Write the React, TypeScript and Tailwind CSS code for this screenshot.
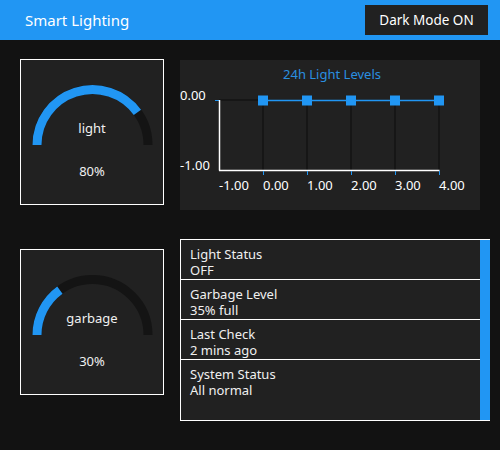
import React from "react"

const BLUE = "#2196f3"

const Gauge = ({ label, value }: { label: string; value: number }) => {
  const cx = 71.5
  const cy = 85
  const r = 55.5
  const a = Math.PI - (Math.PI * value) / 100
  const ex = cx + r * Math.cos(a)
  const ey = cy - r * Math.sin(a)
  return (
    <div className="relative w-[144px] h-[146px] border border-white bg-[#212121]">
      <svg className="absolute left-0 top-0" width="142" height="144" viewBox="0 0 142 144">
        <path
          d={`M ${cx - r} ${cy} A ${r} ${r} 0 0 1 ${cx + r} ${cy}`}
          fill="none"
          stroke="#141414"
          strokeWidth="9"
        />
        <path
          d={`M ${cx - r} ${cy} A ${r} ${r} 0 0 1 ${ex} ${ey}`}
          fill="none"
          stroke={BLUE}
          strokeWidth="9"
        />
      </svg>
      <div className="absolute left-0 right-0 top-[58px] text-center text-[13px] leading-[20px] text-[#f0f0f0]">
        {label}
      </div>
      <div className="absolute left-0 right-0 top-[101px] text-center text-[13px] leading-[20px] text-[#f0f0f0]">
        {value}%
      </div>
    </div>
  )
}

const Chart = () => {
  const xs = [83, 127, 171, 215, 259]
  const ticks = [-1, 0, 1, 2, 3, 4]
  return (
    <div className="w-[300px] h-[150px] bg-[#212121]">
      <svg width="300" height="150" viewBox="0 0 300 150" style={{ fontFamily: "'Noto Sans', sans-serif" }}>
        <text x="152" y="19" textAnchor="middle" fontSize="13" fill="#2a8fe0">
          24h Light Levels
        </text>
        <line x1="39" y1="40" x2="83" y2="40" stroke="#0c0c0c" strokeWidth="1" />
        {xs.map((x) => (
          <line key={x} x1={x} y1="40" x2={x} y2="110" stroke="#0c0c0c" strokeWidth="1" />
        ))}
        <line x1="35" y1="40.5" x2="39" y2="40.5" stroke={BLUE} strokeWidth="1" />
        <line x1="39.5" y1="40" x2="39.5" y2="110.5" stroke="#fff" strokeWidth="1.5" />
        <line x1="39" y1="110.5" x2="259.5" y2="110.5" stroke="#fff" strokeWidth="1.5" />
        {xs.map((x) => (
          <line key={"t" + x} x1={x + 0.5} y1="111" x2={x + 0.5} y2="115" stroke={BLUE} strokeWidth="1" />
        ))}
        <line x1="83" y1="40.5" x2="259" y2="40.5" stroke={BLUE} strokeWidth="1.5" />
        {xs.map((x) => (
          <rect key={"p" + x} x={x - 5} y="35.5" width="10" height="10" fill={BLUE} />
        ))}
        <text x="0" y="40" fontSize="13" fill="#fff">0.00</text>
        <text x="0" y="110" fontSize="13" fill="#fff">-1.00</text>
        {ticks.map((t, i) => (
          <text key={"l" + t} x={39 + i * 44} y="130" fontSize="13" fill="#fff">
            {t.toFixed(2)}
          </text>
        ))}
      </svg>
    </div>
  )
}

const rows = [
  { title: "Light Status", value: "OFF" },
  { title: "Garbage Level", value: "35% full" },
  { title: "Last Check", value: "2 mins ago" },
  { title: "System Status", value: "All normal" },
]

const StatusList = () => (
  <div className="flex w-[310px] h-[182px] border-y border-l border-white">
    <div className="flex flex-col flex-1 bg-[#212121]">
      {rows.map((r, i) => (
        <div
          key={r.title}
          className={`px-[9px] pt-[6px] text-[13px] leading-[16px] text-[#f0f0f0] ${
            i < rows.length - 1 ? "h-[40px] border-b border-white" : "flex-1"
          }`}
        >
          <div>{r.title}</div>
          <div>{r.value}</div>
        </div>
      ))}
    </div>
    <div className="w-[10px] bg-[#2196f3]" />
  </div>
)

export default function App() {
  return (
    <div
      className="w-[500px] h-[450px] bg-[#121212] overflow-hidden"
      style={{ fontFamily: "'Noto Sans', sans-serif" }}
    >
      <div className="flex items-center justify-between h-[40px] bg-[#2196f3] pl-[25px] pr-[12px]">
        <span className="text-[15px] text-white">Smart Lighting</span>
        <button className="h-[30px] w-[123px] bg-[#212121] text-[13.5px] text-white">
          Dark Mode ON
        </button>
      </div>
      <div className="flex gap-[16px] pl-[20px] pt-[19px]">
        <Gauge label="light" value={80} />
        <div className="pt-[1px]">
          <Chart />
        </div>
      </div>
      <div className="flex gap-[16px] pl-[20px] pt-[29px]">
        <div className="pt-[10px]">
          <Gauge label="garbage" value={30} />
        </div>
        <StatusList />
      </div>
    </div>
  )
}
